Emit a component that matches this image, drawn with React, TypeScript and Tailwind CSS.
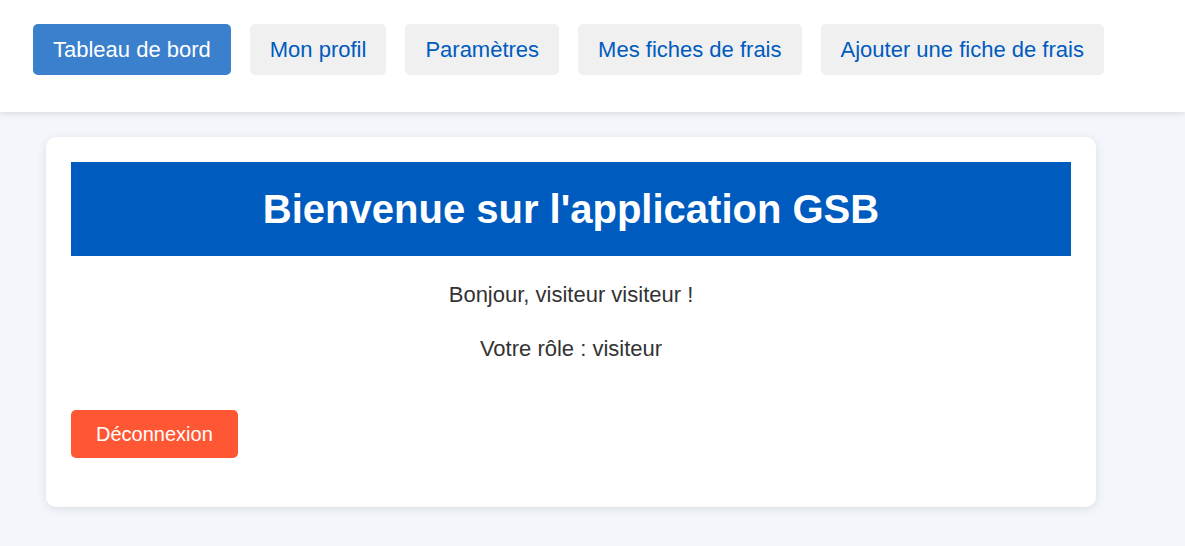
import React from "react";

const links = [
  { label: "Tableau de bord", active: true },
  { label: "Mon profil" },
  { label: "Paramètres" },
  { label: "Mes fiches de frais" },
  { label: "Ajouter une fiche de frais" },
];

export default function App() {
  return (
    <div
      className="min-h-[546px] bg-[#f3f6fb] text-[#333333]"
      style={{ fontFamily: '"Liberation Sans", Arial, sans-serif' }}
    >
      <header className="relative z-10 h-[112px] bg-white shadow-[0_2px_6px_rgba(0,0,0,0.1)]">
        <nav className="flex gap-[19px] pl-[33px] pt-[24px]">
          {links.map((l) => (
            <a
              key={l.label}
              className={
                "block rounded-[5px] px-[20px] py-[13px] text-[22px] leading-[25px] whitespace-nowrap " +
                (l.active
                  ? "bg-[#3b80cc] text-white"
                  : "bg-[#f0f0f0] text-[#005bbf]")
              }
            >
              {l.label}
            </a>
          ))}
        </nav>
      </header>
      <main className="pt-[25px] pl-[46px]">
        <div className="w-[1050px] rounded-[10px] bg-white p-[25px] shadow-[0_2px_10px_rgba(0,0,0,0.1)]">
          <h1 className="bg-[#005bbf] py-[24px] text-center text-[40px] font-bold leading-[46px] text-white">
            Bienvenue sur l'application GSB
          </h1>
          <p className="mt-[22px] text-center text-[22px] leading-[33px]">
            Bonjour, visiteur visiteur !
          </p>
          <p className="mt-[21px] text-center text-[22px] leading-[33px]">
            Votre rôle : visiteur
          </p>
          <button className="mt-[45px] mb-[24px] block rounded-[5px] bg-[#ff5733] px-[25px] py-[12px] text-[20px] leading-[24px] text-white">
            Déconnexion
          </button>
        </div>
      </main>
    </div>
  );
}
